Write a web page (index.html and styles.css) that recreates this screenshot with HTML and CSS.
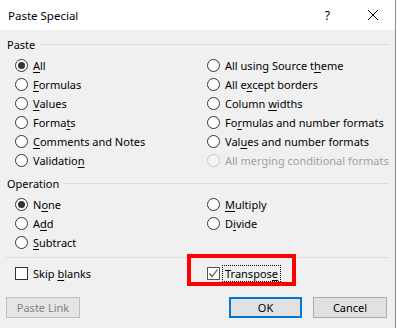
FILE: index.html
```html
<!DOCTYPE html>
<html lang="en">
<head>
  <meta charset="UTF-8" />
  <title>Paste Special</title>
  <link rel="stylesheet" href="styles.css">
</head>
<body>
  <div class="dialog">
    <div class="titlebar">
      <span class="title">Paste Special</span>
      <span class="help">?</span>
      <span class="close">
        <svg width="12" height="12" viewBox="0 0 12 12"><path d="M1 1 L11 11 M11 1 L1 11" stroke="#000" stroke-width="1" fill="none"/></svg>
      </span>
    </div>

    <div class="content">
      <div class="group-head"><span>Paste</span><span class="rule"></span></div>
      <div class="options paste-opts">
        <label class="opt"><span class="radio on"></span><span><u>A</u>ll</span></label>
        <label class="opt"><span class="radio"></span><span><u>F</u>ormulas</span></label>
        <label class="opt"><span class="radio"></span><span><u>V</u>alues</span></label>
        <label class="opt"><span class="radio"></span><span>Forma<u>t</u>s</span></label>
        <label class="opt"><span class="radio"></span><span><u>C</u>omments and Notes</span></label>
        <label class="opt"><span class="radio"></span><span>Validatio<u>n</u></span></label>
        <label class="opt"><span class="radio"></span><span>All using Source t<u>h</u>eme</span></label>
        <label class="opt"><span class="radio"></span><span>All e<u>x</u>cept borders</span></label>
        <label class="opt"><span class="radio"></span><span>Column <u>w</u>idths</span></label>
        <label class="opt"><span class="radio"></span><span>Fo<u>r</u>mulas and number formats</span></label>
        <label class="opt"><span class="radio"></span><span>Val<u>u</u>es and number formats</span></label>
        <label class="opt disabled"><span class="radio"></span><span>All merging conditional formats</span></label>
      </div>

      <div class="group-head"><span>Operation</span><span class="rule"></span></div>
      <div class="options op-opts">
        <label class="opt"><span class="radio on"></span><span>N<u>o</u>ne</span></label>
        <label class="opt"><span class="radio"></span><span>A<u>d</u>d</span></label>
        <label class="opt"><span class="radio"></span><span><u>S</u>ubtract</span></label>
        <label class="opt"><span class="radio"></span><span><u>M</u>ultiply</span></label>
        <label class="opt"><span class="radio"></span><span>D<u>i</u>vide</span></label>
      </div>

      <div class="sep"></div>

      <div class="options check-row">
        <label class="opt"><span class="check"></span><span>Skip <u>b</u>lanks</span></label>
        <label class="opt highlight">
          <span class="check">
            <svg width="11" height="11" viewBox="0 0 11 11"><path d="M1.5 5.5 L4 8.5 L9.5 1.5" stroke="#555" stroke-width="1.2" fill="none"/></svg>
          </span>
          <span class="focus">Transpos<u>e</u></span>
          <span class="redbox"></span>
        </label>
      </div>

      <div class="btn-row">
        <button class="btn" disabled>Paste Link</button>
        <div class="btn-right">
          <button class="btn btn-default">OK</button>
          <button class="btn">Cancel</button>
        </div>
      </div>
    </div>
  </div>
</body>
</html>
```

FILE: styles.css
```css
body {
  margin: 0;
  font-family: "Noto Sans", "Open Sans", sans-serif;
  font-size: 11px;
  color: #000;
  background: #fff;
}
.dialog {
  width: 395px;
  height: 328px;
  border-right: 1px solid #8a8a8a;
  background: #f0f0f0;
  display: flex;
  flex-direction: column;
}
.titlebar {
  height: 30px;
  background: #fff;
  display: flex;
  align-items: center;
  padding: 0 16px 0 8px;
  font-size: 11.5px;
}
.title {
  flex: 1;
}
.help {
  margin-right: 37px;
  font-size: 12px;
}
.close {
  display: flex;
}
.content {
  flex: 1;
  padding-top: 6px;
}
.group-head {
  display: flex;
  align-items: center;
  height: 16px;
  padding: 0 6px 0 7px;
  gap: 5px;
}
.rule {
  flex: 1;
  height: 1px;
  background: #dcdcdc;
}
.options {
  display: grid;
  grid-template-columns: 192px 1fr;
  grid-auto-rows: 19px;
  padding-left: 15px;
  margin-top: 4px;
}
.paste-opts {
  grid-template-rows: repeat(6, 19px);
  grid-auto-flow: column;
  margin-bottom: 5px;
}
.op-opts {
  grid-template-rows: repeat(3, 19px);
  grid-auto-flow: column;
}
.opt {
  display: flex;
  align-items: center;
  white-space: nowrap;
  position: relative;
}
.opt u {
  text-underline-offset: 2px;
}
.radio {
  width: 11px;
  height: 11px;
  border: 1px solid #333;
  border-radius: 50%;
  background: #fff;
  margin-right: 5px;
  display: flex;
  align-items: center;
  justify-content: center;
  flex-shrink: 0;
}
.radio.on::after {
  content: "";
  width: 7px;
  height: 7px;
  border-radius: 50%;
  background: #333;
}
.disabled {
  color: #a0a0a0;
}
.disabled .radio {
  border-color: #c8c8c8;
  background: #f4f4f4;
}
.sep {
  height: 1px;
  background: #dcdcdc;
  margin: 5px 7px 0 6px;
}
.check-row {
  margin-top: 6px;
}
.check {
  width: 11px;
  height: 11px;
  border: 1px solid #333;
  background: #fff;
  margin-right: 5px;
  display: flex;
  align-items: center;
  justify-content: center;
  flex-shrink: 0;
}
.highlight .check {
  border-color: #555;
  margin-right: 3px;
}
.focus {
  outline: 1px dotted #000;
  padding: 0 2px;
  line-height: 15px;
}
.redbox {
  position: absolute;
  left: -20px;
  top: -10px;
  width: 101px;
  height: 24px;
  border: 4px solid #f00;
}
.btn-row {
  display: flex;
  justify-content: space-between;
  padding: 0 8px 0 6px;
  margin-top: 14px;
}
.btn-right {
  display: flex;
  gap: 11px;
}
.btn {
  width: 74px;
  height: 21px;
  font-family: inherit;
  font-size: 11px;
  color: #000;
  background: #e1e1e1;
  border: 1px solid #adadad;
  border-radius: 0;
  padding: 0;
}
.btn-default {
  border: 2px solid #0078d7;
  width: 73px;
}
.btn:disabled {
  color: #838383;
  background: #e5e5e5;
  border-color: #bfbfbf;
}
```
